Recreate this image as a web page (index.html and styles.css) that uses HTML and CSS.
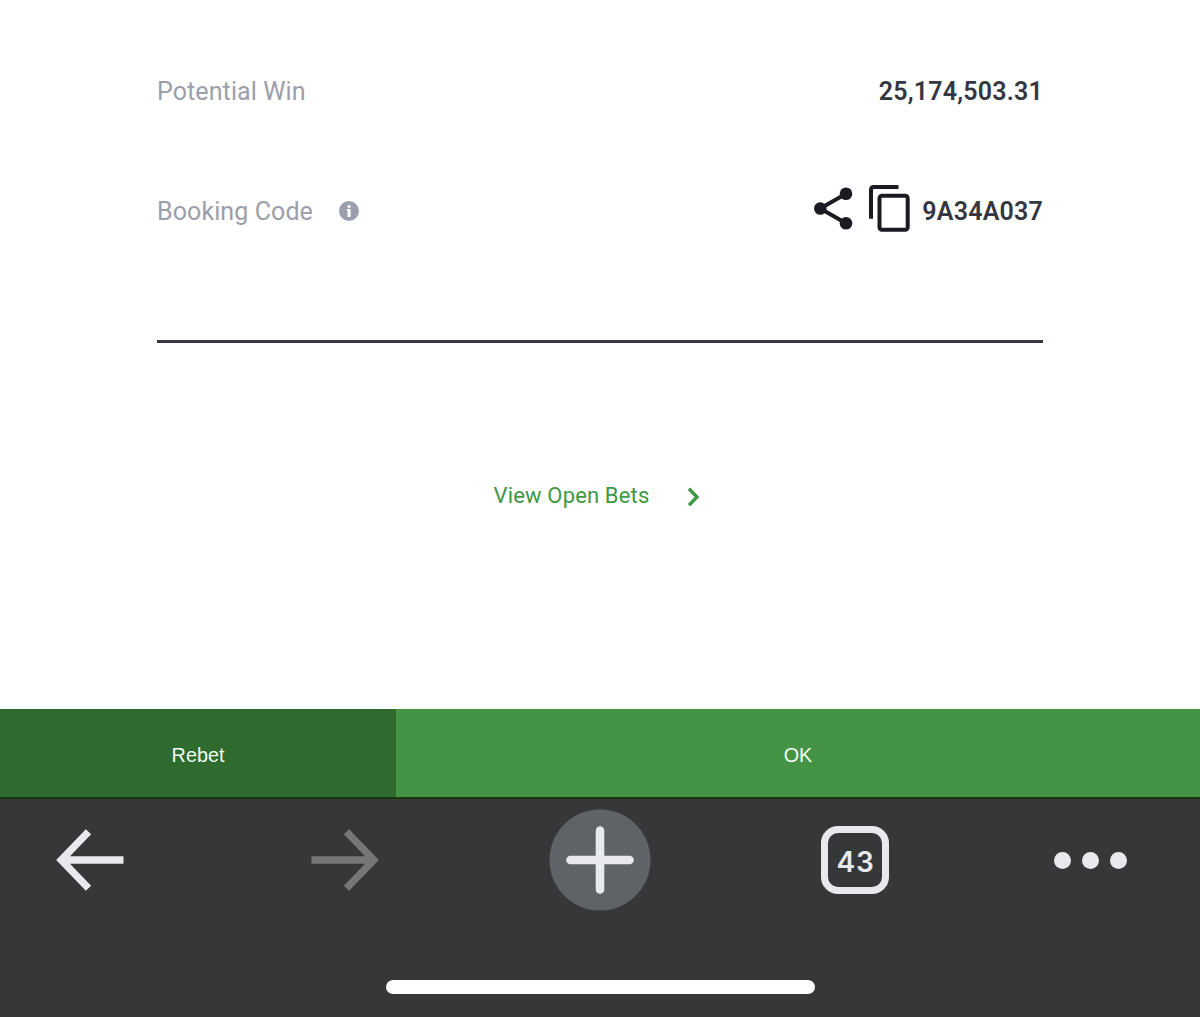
FILE: index.html
```
<!DOCTYPE html>
<html lang="en">
  <head>
    <meta charset="UTF-8">
    <title>Bet Receipt</title>
    <meta name="viewport" content="width=device-width, initial-scale=1">
    <link rel="stylesheet" href="styles.css">
  </head>
  <body>
    <div class="receipt">
      <div class="row">
        <span class="label">Potential Win</span>
        <span class="value">25,174,503.31</span>
      </div>
      <div class="row">
        <span class="label">Booking Code</span>
        <svg class="info" width="20" height="20" viewBox="0 0 20 20">
          <circle cx="10" cy="10" r="10" fill="#9a9fab"/>
          <path d="M8.6 4.2h3v2.5h-3zM7.8 8h3.8v8H8.6V9.6h-.8z" fill="#fff"/>
        </svg>
        <svg class="share" width="39" height="43" viewBox="0 0 39 43">
          <path d="M32 6.8L6.2 21.5L32 36.3" fill="none" stroke="#1b1b21" stroke-width="4"/>
          <circle cx="32" cy="6.8" r="6.3" fill="#1b1b21"/>
          <circle cx="6.3" cy="21.5" r="6.3" fill="#1b1b21"/>
          <circle cx="32" cy="36.3" r="6.3" fill="#1b1b21"/>
        </svg>
        <svg class="copy" width="41" height="47" viewBox="0 0 41 47">
          <path d="M2 33.8V5Q2 2 5 2H29.5" fill="none" stroke="#1b1b21" stroke-width="4"/>
          <rect x="10.5" y="10.8" width="28.2" height="34" rx="2.5" fill="none" stroke="#1b1b21" stroke-width="4"/>
        </svg>
        <span class="value code">9A34A037</span>
      </div>
    </div>

    <div class="open-bets">
      <span>View Open Bets</span>
      <svg width="13" height="20" viewBox="0 0 13 20">
        <path d="M2 1.7L10 10L2 18.3" fill="none" stroke="#3f9844" stroke-width="3.4"/>
      </svg>
    </div>

    <div class="actions">
      <div class="rebet">Rebet</div>
      <div class="ok">OK</div>
    </div>

    <div class="browser">
      <div class="toolbar">
        <div class="tool">
          <svg class="arrow" width="68" height="62" viewBox="0 0 68 62">
            <path d="M67.5 31H6M32.5 2.7L5.3 31L32.5 59.3" fill="none" stroke="#e8e9ed" stroke-width="7.4"/>
          </svg>
        </div>
        <div class="tool">
          <svg class="arrow" width="68" height="62" viewBox="0 0 68 62">
            <path d="M.5 31H62M35.5 2.7L62.7 31L35.5 59.3" fill="none" stroke="#757678" stroke-width="7.4"/>
          </svg>
        </div>
        <div class="tool">
          <svg width="102" height="102" viewBox="0 0 102 102">
            <circle cx="51" cy="51" r="50.5" fill="#5f6367"/>
            <path d="M51 21.5v59M21.5 51h59" stroke="#e8e9ed" stroke-width="8.6" stroke-linecap="round"/>
          </svg>
        </div>
        <div class="tool"><div class="tabs">43</div></div>
        <div class="tool dots">
          <i></i><i></i><i></i>
        </div>
      </div>
      <div class="home-bar"></div>
    </div>
  </body>
</html>
```
FILE: styles.css
```
* {
  box-sizing: border-box;
}

html, body {
  margin: 0;
  padding: 0;
}

body {
  height: 1017px;
  display: flex;
  flex-direction: column;
  background: #fff;
  font-family: Roboto, sans-serif;
  overflow: hidden;
}

.receipt {
  height: 282px;
  margin: 61px 157px 0;
  border-bottom: 3px solid #343840;
}

.row {
  display: flex;
  align-items: center;
  height: 60px;
  margin-bottom: 60px;
  font-size: 25px;
}

.label {
  color: #9c9ea9;
  letter-spacing: 0.1px;
}

.value {
  margin-left: auto;
  color: #353740;
  font-weight: 600;
  letter-spacing: 0.2px;
}

.info {
  margin-left: 26px;
}

.share {
  margin: -5px 16px 0 auto;
}

.copy {
  margin-top: -5px;
}

.code {
  margin-left: 12px;
}

.open-bets {
  display: flex;
  align-items: center;
  justify-content: center;
  height: 60px;
  margin-top: 122px;
  color: #3f9844;
  font-size: 22px;
  letter-spacing: 0.15px;
}

.open-bets svg {
  margin: 3px 6px 0 38px;
}

.actions {
  display: flex;
  height: 90px;
  margin-top: auto;
  border-bottom: 2px solid #15380f;
  color: #f0fff0;
  font-family: "Liberation Sans", Arial, sans-serif;
  font-size: 19.8px;
}

.actions div {
  display: flex;
  align-items: center;
  justify-content: center;
  padding-top: 4px;
}

.rebet {
  width: 33%;
  background: #2f6a2f;
}

.ok {
  flex: 1;
  background: #459445;
}

.browser {
  height: 218px;
  padding-top: 10px;
  background: #363739;
}

.toolbar {
  display: flex;
  justify-content: space-between;
  height: 102px;
  padding: 0 34px;
}

.tool {
  display: flex;
  align-items: center;
  justify-content: center;
  width: 112px;
}

.arrow {
  margin-bottom: 1px;
}

.tabs {
  width: 68px;
  height: 68px;
  padding: 4px 0 0 1px;
  border: 7px solid #e8e9ed;
  border-radius: 17px;
  color: #e8e9ed;
  font: 600 28px/50px Inter, sans-serif;
  letter-spacing: 0.8px;
  text-align: center;
}

.dots {
  justify-content: flex-start;
  gap: 11px;
}

.dots i {
  width: 17px;
  height: 17px;
  border-radius: 50%;
  background: #e8e9ed;
}

.home-bar {
  width: 429px;
  height: 14px;
  margin: 69px auto 0;
  border-radius: 7px;
  background: #fff;
}
```
